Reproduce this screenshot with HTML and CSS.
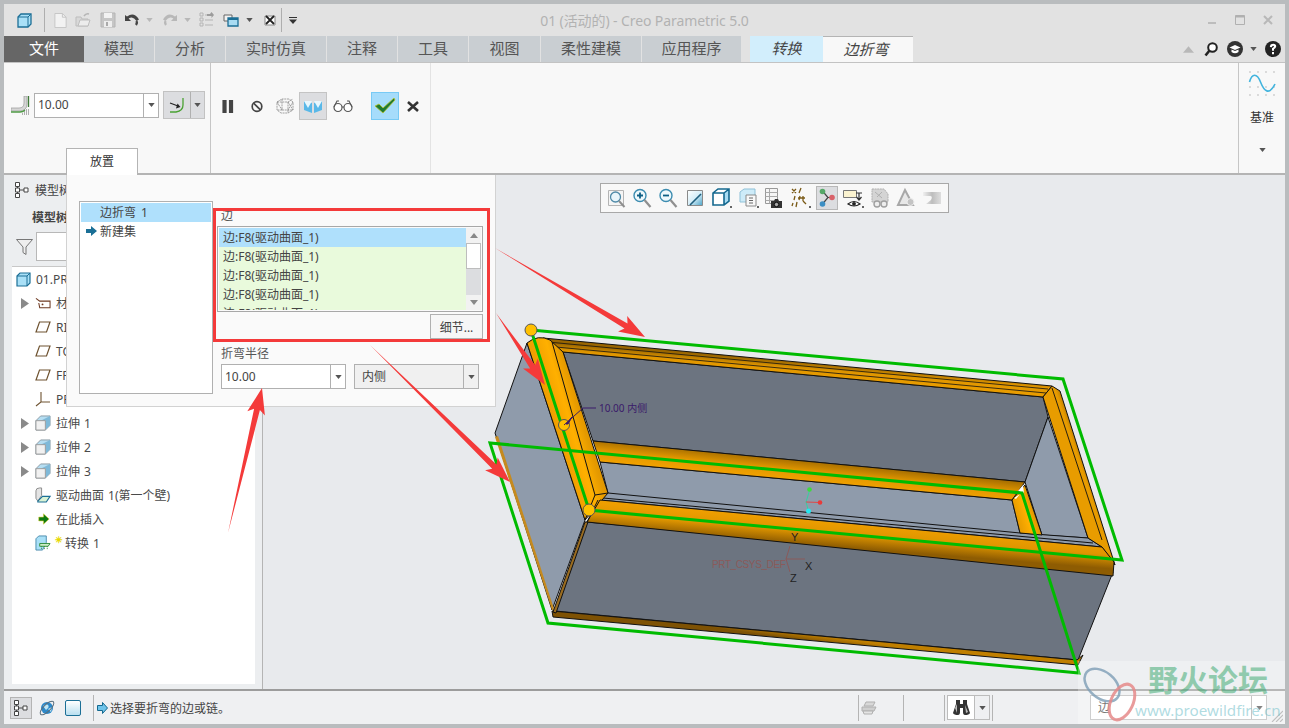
FILE: index.html
```html
<!DOCTYPE html>
<html lang="zh">
<head>
<meta charset="utf-8">
<title>01 (活动的) - Creo Parametric 5.0</title>
<link rel="stylesheet" href="styles.css">
</head>
<body>
<svg class="defs" width="0" height="0">
  <defs>
    <symbol id="caret" viewBox="0 0 8 5"><path d="M0 0H8L4 5Z" fill="currentColor"/></symbol>
    <symbol id="tri" viewBox="0 0 8 11"><path d="M0 0L8 5.5L0 11Z" fill="#8a8a8a"/></symbol>
    <symbol id="plane" viewBox="0 0 16 12"><path d="M4.5 1H15L11.5 11H1Z" fill="#fff" stroke="#6e5230" stroke-width="1.2"/></symbol>
    <symbol id="extrude" viewBox="0 0 17 17"><path d="M1 6L6 1H16V11L11 16H1Z" fill="#b6def2" stroke="#8a9aa4"/><path d="M6 6L16 1V11L11 16V6Z" fill="#7fb9d8"/><path d="M1 6H11V16H1Z" fill="#f1f1f1" stroke="#9a9a9a"/></symbol>
    <linearGradient id="gMid" gradientUnits="userSpaceOnUse" x1="802" y1="460" x2="800" y2="480"><stop offset="0" stop-color="#a56d00"/><stop offset=".55" stop-color="#e39800"/><stop offset="1" stop-color="#f0a000"/></linearGradient>
    <linearGradient id="gFront" gradientUnits="userSpaceOnUse" x1="852" y1="523" x2="850" y2="548"><stop offset="0" stop-color="#ee9e00"/><stop offset=".45" stop-color="#e09600"/><stop offset="1" stop-color="#8e5c02"/></linearGradient>
    <linearGradient id="gBack" gradientUnits="userSpaceOnUse" x1="800" y1="362" x2="799" y2="375"><stop offset="0" stop-color="#9a6600"/><stop offset=".5" stop-color="#e09600"/><stop offset="1" stop-color="#e89c00"/></linearGradient>
    <linearGradient id="gLeft" gradientUnits="userSpaceOnUse" x1="555" y1="425" x2="592" y2="414"><stop offset="0" stop-color="#f09f00"/><stop offset=".4" stop-color="#ffb000"/><stop offset=".7" stop-color="#e59a00"/><stop offset="1" stop-color="#d68f00"/></linearGradient>
    <linearGradient id="gRight" gradientUnits="userSpaceOnUse" x1="1066" y1="470" x2="1090" y2="462"><stop offset="0" stop-color="#e89c00"/><stop offset=".6" stop-color="#e89c00"/><stop offset="1" stop-color="#8a5a02"/></linearGradient>
    <linearGradient id="gBottom" gradientUnits="userSpaceOnUse" x1="815" y1="635" x2="814" y2="642"><stop offset="0" stop-color="#c07f00"/><stop offset="1" stop-color="#7e5204"/></linearGradient>
    <linearGradient id="gInner" gradientUnits="userSpaceOnUse" x1="1016" y1="515" x2="1036" y2="509"><stop offset="0" stop-color="#e89c00"/><stop offset=".5" stop-color="#ffb000"/><stop offset="1" stop-color="#d68f00"/></linearGradient>
    <linearGradient id="gRepaint" x1="0" y1="0" x2="1" y2="1"><stop offset="0" stop-color="#fff"/><stop offset=".5" stop-color="#d6eef8"/><stop offset="1" stop-color="#4aa3c8"/></linearGradient>
    <linearGradient id="gShade" x1="0" y1="0" x2="1" y2="0"><stop offset="0" stop-color="#f0f0f0"/><stop offset=".5" stop-color="#bdbdbd"/><stop offset="1" stop-color="#dedede"/></linearGradient>
  </defs>
</svg>

<div class="window">
  <header class="titlebar">
    <div class="qat">
      <svg class="i15" viewBox="0 0 15 15"><path d="M1 4L4 1H14V11L11 14H1Z" fill="#a9e0f7" stroke="#1c6f96" stroke-width="1.3"/><path d="M11 4H1M11 4L14 1M11 4V14" fill="none" stroke="#1c6f96"/></svg>
      <span class="qsep"></span>
      <svg class="i15" viewBox="0 0 14 16"><path d="M1 .5H9L13 4.5V15.5H1Z" fill="#f2f2f2" stroke="#c4c4c4"/><path d="M9 .5V4.5H13" fill="none" stroke="#c4c4c4"/></svg>
      <svg class="i16" viewBox="0 0 16 16"><path d="M1 5H6L7 7H13V14H1Z" fill="#d8d8d8" stroke="#bdbdbd"/><path d="M3 14L5 8H15L13 14Z" fill="#ececec" stroke="#bdbdbd"/><path d="M9 4Q11 1 14 2" fill="none" stroke="#b5b5b5" stroke-width="1.5"/></svg>
      <svg class="i16" viewBox="0 0 16 16"><path d="M1 1H15V15H1Z" fill="#c6c6c6" stroke="#b4b4b4"/><path d="M4 1H12V6H4Z" fill="#f2f2f2"/><path d="M4 9H12V15H4Z" fill="#eee"/><path d="M6 10H8V14H6Z" fill="#aaa"/></svg>
      <svg class="i16" viewBox="0 0 16 14"><path d="M1 2V8H7L4.6 5.6Q9 2.5 12.5 8L15 6.5Q10 -1.5 3 3.6Z" fill="#444"/><path d="M12.5 8Q13.6 10 12 12" stroke="#444" stroke-width="2.4" fill="none"/></svg>
      <svg class="car"><use href="#caret"/></svg>
      <svg class="i16" viewBox="0 0 16 14"><path d="M15 2V8H9L11.4 5.6Q7 2.5 3.500 8L1 6.500Q6 -1.500 13 3.600Z" fill="#b8b8b8"/><path d="M3.500 8Q2.400 10 4 12" stroke="#b8b8b8" stroke-width="2.400" fill="none"/></svg>
      <svg class="car"><use href="#caret"/></svg>
      <svg class="i16" viewBox="0 0 16 16"><path d="M1 1H4V4H1ZM1 6H4V9H1ZM1 11H4V14H1ZM6 3H14M6 8H14M6 13H14" fill="none" stroke="#b4b4b4"/><path d="M8 2H11L12.500 0L15 3L12.500 6V4H8Z" fill="#9c9c9c"/></svg>
      <svg class="i16" viewBox="0 0 16 16"><path d="M1 3H9V9H1Z" fill="#f2f2f2" stroke="#666"/><path d="M5 6H15V14H5Z" fill="#a9dcf3" stroke="#1c6f96" stroke-width="1.300"/><path d="M5 6H15V8H5Z" fill="#1c6f96"/></svg>
      <svg class="car dark"><use href="#caret"/></svg>
      <svg class="i12" viewBox="0 0 12 12"><path d="M1 2H11V11H1Z" fill="#fff" stroke="#888"/><path d="M2 2L10 10M10 2L2 10" stroke="#222" stroke-width="1.800"/></svg>
      <span class="qsep"></span>
      <svg class="car wide" viewBox="0 0 8 7"><path d="M0 0H8V1H0Z" fill="#333"/><path d="M0 2.500H8L4 7Z" fill="#333"/></svg>
    </div>
    <div class="wintitle">01 (活动的) - Creo Parametric 5.0</div>
    <div class="winbtns">
      <svg class="wb" viewBox="0 0 10 10"><path d="M1 7H9V9H1Z" fill="#bdbdbd"/></svg>
      <svg class="wb" viewBox="0 0 10 10"><path d="M.5 .5H9.500V9.500H.5Z" fill="none" stroke="#b0b0b0"/><path d="M.5 .5H9.500V2.500H.5Z" fill="#b0b0b0"/></svg>
      <svg class="wb" viewBox="0 0 10 10"><path d="M1 1L9 9M9 1L1 9" stroke="#b8b8b8" stroke-width="2"/></svg>
    </div>
  </header>

  <nav class="tabs">
    <div class="tab file">文件</div>
    <div class="tab w70">模型</div>
    <div class="tab w70">分析</div>
    <div class="tab w100">实时仿真</div>
    <div class="tab w70">注释</div>
    <div class="tab w70">工具</div>
    <div class="tab w71">视图</div>
    <div class="tab w100">柔性建模</div>
    <div class="tab w99">应用程序</div>
    <div class="tab ctx conv">转换</div>
    <div class="tab ctx act">边折弯</div>
    <div class="tabtools">
      <svg class="up" viewBox="0 0 12 7"><path d="M0 7L6 0L12 7Z" fill="#b8b8b8"/></svg>
      <svg class="t16" viewBox="0 0 14 15"><circle cx="8.500" cy="5.500" r="4.300" fill="#fff" stroke="#222" stroke-width="2"/><path d="M5.500 8.500L1.500 13.500" stroke="#222" stroke-width="2.600"/></svg>
      <svg class="t16b cap" viewBox="0 0 16 16"><circle cx="8" cy="8" r="8" fill="#333"/><path d="M2.500 6.500L8 4L13.500 6.500L8 9Z" fill="#fff"/><path d="M4.500 8.500V11Q8 13.500 11.500 11V8.500L8 10Z" fill="#fff"/></svg>
      <svg class="car dark mini"><use href="#caret"/></svg>
      <svg class="t16b help" viewBox="0 0 16 16"><circle cx="8" cy="8" r="8" fill="#222"/><path d="M4.800 6Q5 2.700 8.200 2.700Q11.400 2.900 11.200 5.600Q11 7.300 9 8.300V9.700H7V7.300Q9 6.500 9 5.300Q8.800 4.600 8 4.700Q7 4.800 7 6.200Z" fill="#fff"/><path d="M7 11H9V13.200H7Z" fill="#fff"/></svg>
    </div>
  </nav>

  <section class="ribbon">
    <div class="rgroup first">
      <div class="rrow">
        <svg class="edgeicon" viewBox="0 0 19 19"><path d="M0 12H8Q13 12 13 7V0H16V8Q16 15 8 15H0Z" fill="#d6d6d6" stroke="#9a9a9a" stroke-width=".7"/><path d="M0 16H9Q12 16 14 14" fill="none" stroke="#4f9b45" stroke-width="1.300"/><path d="M17.500 0V11" stroke="#3f7a38" stroke-width="1.300"/><path d="M15 14h.9M17 14h.9M13 16h.9M15 16h.9M17 16h.9M15 18h.9M17 18h.9M11 18h.9M13 18h.9" stroke="#555" stroke-width="1"/></svg>
        <div class="combo c125 main-val"><span class="val">10.00</span><span class="drop"><svg class="car dark"><use href="#caret"/></svg></span></div>
        <div class="flip">
          <span class="flipmain"><svg width="17" height="17" viewBox="0 0 17 17"><path d="M14 1V8Q14 14 7 15H1" fill="none" stroke="#4aa233" stroke-width="1.300"/><path d="M1 6L9 9" stroke="#222" stroke-width="1.100"/><path d="M7 11.500L11.500 10L8.500 6.500Z" fill="#222"/></svg></span>
          <span class="flipdrop"><svg class="car dark"><use href="#caret"/></svg></span>
        </div>
      </div>
      <div class="placetab">放置</div>
    </div>
    <div class="rgroup second">
      <svg class="ic12" viewBox="0 0 12 14"><path d="M0 0H4.500V14H0ZM7 0H11.500V14H7Z" fill="#444"/></svg>
      <svg class="ic12" viewBox="0 0 12 12"><circle cx="6" cy="6" r="4.800" fill="none" stroke="#444" stroke-width="1.700"/><path d="M2.600 2.600L9.400 9.400" stroke="#444" stroke-width="1.700"/></svg>
      <svg class="ic20" viewBox="0 0 20 16"><path d="M2 4L7 1H14L18 4V12L13 15H6L2 12ZM2 4H13V15M13 4L18 1M7 1V12H2M7 12L18 12M2 4L7 12M13 4L18 12M18 4L13 12" fill="none" stroke="#8a8a8a" stroke-width=".8" stroke-dasharray="2 .7"/></svg>
      <span class="toggle"><svg width="20" height="15" viewBox="0 0 20 15"><path d="M1 2L9 4V14L1 11Z" fill="#59b8e8"/><path d="M11 4L19 2V11L11 14Z" fill="#59b8e8"/><path d="M1 2L9 2L5 9Z" fill="#e8f7fd"/><path d="M11 2L19 2L15 9Z" fill="#e8f7fd"/></svg></span>
      <svg class="ic20" viewBox="0 0 20 12"><circle cx="5" cy="7.500" r="4" fill="#fff" stroke="#555" stroke-width="1.200"/><circle cx="15" cy="7.500" r="4" fill="#fff" stroke="#555" stroke-width="1.200"/><path d="M9 7L11 7M1 7L4 1H6M19 7L16 1H14" fill="none" stroke="#555" stroke-width="1.100"/></svg>
      <span class="okbtn"><svg width="22" height="18" viewBox="0 0 22 18"><path d="M1 9L5 7L9 11L20 1L21 3L9 16Z" fill="#1f7a33" stroke="#b9c22a" stroke-width=".8"/></svg></span>
      <svg class="ic12 xbtn" viewBox="0 0 12 11"><path d="M1 1L11 10M11 1L1 10" stroke="#333" stroke-width="2.600"/></svg>
    </div>
    <div class="rspacer"></div>
    <div class="rgroup third">
      <svg class="wave" width="28" height="26" viewBox="0 0 28 26"><path d="M2 1h.01M10 1h.01M18 1h.01M26 1h.01M2 16h.01M10 16h.01M18 16h.01M26 16h.01M2 24h.01M10 24h.01M18 24h.01M26 24h.01" stroke="#666" stroke-linecap="round"/><path d="M1.500 11C4 2 9 2 12.500 11S21 25 27 13" fill="none" stroke="#42b4de" stroke-width="1.600"/></svg>
      <div class="rlabel">基准</div>
      <svg class="car dark rcar"><use href="#caret"/></svg>
    </div>
  </section>

  <main class="main">
    <aside class="side">
      <div class="sidehead">
        <svg class="nodeic" viewBox="0 0 14 16"><path d="M.5 .5H4.500V4.500H.5ZM.5 6H4.500V10H.5ZM.5 11.500H4.500V15.500H.5ZM9 6H13V10H9ZM2.500 4.500V6M2.500 10V11.500M4.500 8H9" fill="#fff" stroke="#444"/></svg>
        <span>模型树</span>
      </div>
      <div class="sidetitle">模型树</div>
      <div class="sidefilter">
        <svg width="17" height="16" viewBox="0 0 17 16"><path d="M.5 .5H16.500L10 8V15.500L7 13.500V8Z" fill="#eee" stroke="#777"/></svg>
        <span class="filterbox"></span>
      </div>
      <div class="tree">
        <div class="row top">
          <svg class="cube" viewBox="0 0 15 15"><path d="M1 4L4 1H14V11L11 14H1Z" fill="#a9e0f7" stroke="#1c6f96" stroke-width="1.200"/><path d="M11 4H1M11 4L14 1M11 4V14" fill="none" stroke="#1c6f96"/></svg>
          <span>01.PRT</span>
        </div>
        <div class="row">
          <svg class="exp"><use href="#tri"/></svg>
          <svg class="ric" viewBox="0 0 17 12"><path d="M1 1L5 4H16V11H5L4 6" fill="#fff" stroke="#6e3a22" stroke-width="1.100"/><circle cx="8" cy="7.500" r="1" fill="#6e3a22"/></svg>
          <span>材料</span>
        </div>
        <div class="row"><span class="noexp"></span><svg class="ric"><use href="#plane"/></svg><span>RIGHT</span></div>
        <div class="row"><span class="noexp"></span><svg class="ric"><use href="#plane"/></svg><span>TOP</span></div>
        <div class="row"><span class="noexp"></span><svg class="ric"><use href="#plane"/></svg><span>FRONT</span></div>
        <div class="row"><span class="noexp"></span><svg class="ric" viewBox="0 0 16 16"><path d="M6 1V11L1 15M6 11H15" fill="none" stroke="#6e5230" stroke-width="1.100"/></svg><span>PRT_CSYS_DEF</span></div>
        <div class="row"><svg class="exp"><use href="#tri"/></svg><svg class="ric"><use href="#extrude"/></svg><span>拉伸 1</span></div>
        <div class="row"><svg class="exp"><use href="#tri"/></svg><svg class="ric"><use href="#extrude"/></svg><span>拉伸 2</span></div>
        <div class="row"><svg class="exp"><use href="#tri"/></svg><svg class="ric"><use href="#extrude"/></svg><span>拉伸 3</span></div>
        <div class="row"><span class="noexp"></span><svg class="ric" viewBox="0 0 17 17"><path d="M1 12V4Q1 1 5 1H7V9L3 15Z" fill="#e4e4e4" stroke="#8a8a8a"/><path d="M3 15L8 10H16L12 16H3Z" fill="#d9f3d5" stroke="#1c6f96" stroke-width="1.200"/></svg><span>驱动曲面 1(第一个壁)</span></div>
        <div class="row"><span class="noexp"></span><svg class="ric" viewBox="0 0 17 13"><path d="M4 4.500H9V1L15 6.500L9 12V8.500H4Z" fill="#0d7a13" stroke="#e0d030" stroke-width=".6"/></svg><span>在此插入</span></div>
        <div class="row"><span class="noexp"></span><svg class="ric" viewBox="0 0 17 17"><path d="M1 4L4 1H12V8L8 16H1Z" fill="#a9e0f7" stroke="#4a8bad"/><path d="M5 9H16L14 12H5Z" fill="#cdeec6" stroke="#2e8b3a"/><path d="M7 12V16M10 12V16M13 12V16" stroke="#2e8b3a" stroke-dasharray="1 1"/></svg><span class="star">✳</span><span>转换 1</span></div>
      </div>
    </aside>

    <div class="canvas">
      <div class="gtools">
        <svg class="gi" viewBox="0 0 22 24"><path d="M3.500 4.500H18.500V19.500H3.500Z" fill="#f5f5f5" stroke="#b4b4b4"/><circle cx="10.500" cy="11" r="5" fill="#e8f5fb" stroke="#4f8aa8" stroke-width="1.300"/><path d="M14 15L19.500 21" stroke="#8f8f8f" stroke-width="2"/></svg>
        <svg class="gi" viewBox="0 0 22 24"><circle cx="9" cy="9.500" r="6" fill="#eef8fc" stroke="#3c8cb0" stroke-width="1.400"/><path d="M13.500 14L19.500 21" stroke="#8f8f8f" stroke-width="2.200"/><path d="M6 9.500H12M9 6.500V12.500" stroke="#0d5f85" stroke-width="1.800"/></svg>
        <svg class="gi" viewBox="0 0 22 24"><circle cx="9" cy="9.500" r="6" fill="#eef8fc" stroke="#3c8cb0" stroke-width="1.400"/><path d="M13.500 14L19.500 21" stroke="#8f8f8f" stroke-width="2.200"/><path d="M6 9.500H12" stroke="#0d5f85" stroke-width="1.800"/></svg>
        <svg class="gi" viewBox="0 0 22 24"><path d="M3.500 4.500H18.500V19.500H3.500Z" fill="url(#gRepaint)" stroke="#8a8a8a"/><path d="M6 19L17 8" stroke="#1f5f7e" stroke-width="1.600"/></svg>
        <svg class="gi" viewBox="0 0 22 24"><path d="M3 7L8 3H19V15L14 19H3Z" fill="#fff"/><path d="M14 7L19 3V15L14 19Z" fill="#a9dcf3"/><path d="M3 7L8 3H19V15L14 19H3ZM3 7H14V19M14 7L19 3" fill="none" stroke="#14688f" stroke-width="1.600"/><path d="M20 20H22V22H20Z" fill="#666"/></svg>
        <svg class="gi" viewBox="0 0 22 24"><path d="M3 6L7 3H18V16H3Z" fill="#cdebf8" stroke="#8fc1d8"/><path d="M9 9H19V20H9Z" fill="#f8f8f8" stroke="#8a8a8a"/><path d="M12 12H16M12 14.500H16M12 17H16" stroke="#666"/><path d="M20 20H22V22H20Z" fill="#666"/></svg>
        <svg class="gi" viewBox="0 0 22 24"><path d="M2.500 2.500H14.500V17.500H2.500Z" fill="#f6f6f6" stroke="#999"/><path d="M2.500 6.500H14.500M2.500 10.500H14.500M2.500 14.500H14.500M6.500 2.500V17.500" stroke="#aaa"/><path d="M8 15H11L12 13H15L16 15H19V22H8Z" fill="#333"/><circle cx="13.500" cy="18.500" r="2.200" fill="#aaa" stroke="#111"/></svg>
        <svg class="gi" viewBox="0 0 22 24"><path d="M3 3L7 7M7 3L3 7M12 2L10 7M6 10L5 14M11 10L10 14M9 12H16M14 10V15M4 17L3 20M8 16L7 21M14 15L17 18" fill="none" stroke="#7a5a16" stroke-width="1.300"/><path d="M20 20H22V22H20Z" fill="#666"/></svg>
        <span class="gactive"><svg width="20" height="22" viewBox="0 0 20 22"><path d="M5.500 4L11 10.500L5.500 17M11 10.500H15" fill="none" stroke="#444" stroke-width="1.200"/><circle cx="5.500" cy="4.500" r="2.800" fill="#56a868"/><circle cx="15" cy="10.500" r="2.800" fill="#d9626a"/><circle cx="5.500" cy="17" r="2.800" fill="#3c8fc4"/></svg></span>
        <svg class="gi" viewBox="0 0 22 24"><path d="M1.500 4.500H14.500V11.500H1.500Z" fill="#fbf3d0" stroke="#777"/><path d="M14 7H20M17 7V13M14.500 11L17 14L19.500 11" fill="none" stroke="#333" stroke-width="1.200"/><path d="M6 18Q12 13 18 18Q12 22 6 18Z" fill="#fff" stroke="#222" stroke-width="1.200"/><circle cx="12" cy="17.800" r="1.900" fill="#222"/><path d="M20 20H22V22H20Z" fill="#666"/></svg>
        <svg class="gi" viewBox="0 0 22 24"><path d="M3 3H15L19 8V16H3Z" fill="#d4d4d4" stroke="#b0b0b0" stroke-dasharray="2 .6"/><path d="M6 6L13 12M13 6L8 11" stroke="#b0b0b0"/><circle cx="8" cy="18" r="3" fill="#eee" stroke="#a0a0a0" stroke-width="1.400"/><circle cx="15" cy="18" r="3" fill="#eee" stroke="#a0a0a0" stroke-width="1.400"/></svg>
        <svg class="gi" viewBox="0 0 22 24"><path d="M10 4L18 19H3Z" fill="#e8e8e8" stroke="#a8a8a8" stroke-width="2"/><circle cx="15.500" cy="16" r="3.500" fill="#c4c4c4" stroke="#eee"/></svg>
        <svg class="gi" viewBox="0 0 22 24"><path d="M2 6H20V18H5L10 14Q12 10 9 10H2Z" fill="url(#gShade)"/></svg>
      </div>
    </div>

    <div class="popup">
      <div class="setlist">
        <div class="setitem sel">边折弯 1</div>
        <div class="setitem"><svg class="setarrow" viewBox="0 0 11 10"><path d="M0 3H5V0L11 5L5 10V7H0Z" fill="#1a6f96"/></svg>新建集</div>
      </div>
      <div class="refs">
        <div class="lab edge">边</div>
        <div class="listbox">
          <div class="rows">
            <div class="lrow blue">边:F8(驱动曲面_1)</div>
            <div class="lrow">边:F8(驱动曲面_1)</div>
            <div class="lrow">边:F8(驱动曲面_1)</div>
            <div class="lrow">边:F8(驱动曲面_1)</div>
            <div class="lrow">边:F8(驱动曲面_1)</div>
          </div>
          <div class="sbar">
            <span class="sbtn"><svg class="tiny" viewBox="0 0 8 5"><path d="M0 5H8L4 0Z" fill="#888"/></svg></span>
            <span class="sthumb"></span>
            <span class="strack"></span>
            <span class="sbtn"><svg class="tiny" viewBox="0 0 8 5"><path d="M0 0H8L4 5Z" fill="#888"/></svg></span>
          </div>
        </div>
        <div class="btnrow"><button class="detail">细节...</button></div>
        <div class="lab radius">折弯半径</div>
        <div class="radiusrow">
          <div class="combo c125"><span class="val">10.00</span><span class="drop"><svg class="car dark"><use href="#caret"/></svg></span></div>
          <div class="combo c125 off"><span class="val">内侧</span><span class="drop"><svg class="car dark"><use href="#caret"/></svg></span></div>
        </div>
      </div>
    </div>
  </main>

  <footer class="status">
    <span class="stree"><svg width="14" height="16" viewBox="0 0 14 16"><path d="M.5 .5H4.500V4.500H.5ZM.5 6H4.500V10H.5ZM.5 11.500H4.500V15.500H.5ZM9 6H13V10H9ZM2.500 4.500V6M2.500 10V11.500M4.500 8H9" fill="#fff" stroke="#444"/></svg></span>
    <svg class="globe" viewBox="0 0 16 16"><circle cx="8" cy="8" r="6" fill="#2c88c9"/><path d="M4 6Q7 3 9 5T7 10ZM9 9L13 7L12 12Z" fill="#bfe6f5"/><ellipse cx="8" cy="8" rx="9" ry="3.500" transform="rotate(-45 8 8)" fill="none" stroke="#5a6e7c"/></svg>
    <span class="sq"></span>
    <span class="ssep lead"></span>
    <svg class="msgarrow" viewBox="0 0 11 12"><path d="M.5 3.500H5.500V.5L10.500 6L5.500 11.500V8.500H.5Z" fill="#6fc4ea" stroke="#14688f"/></svg>
    <span class="msg">选择要折弯的边或链。</span>
    <span class="sfill"></span>
    <span class="ssep"></span>
    <svg class="printer" viewBox="0 0 16 14"><path d="M5 1H14L12 5H3Z" fill="#d8d8d8" stroke="#b0b0b0"/><path d="M1 6H15L13 10H1Z" fill="#cfcfcf" stroke="#b0b0b0"/><path d="M2 10H12L11 13H3Z" fill="#e4e4e4" stroke="#b0b0b0"/></svg>
    <span class="ssep s2"></span>
    <span class="ssep s3"></span>
    <span class="bino">
      <span class="binomain"><svg width="17" height="15" viewBox="0 0 17 15"><path d="M3 0H7V4H10V0H14V4L17 13Q16 15 12 15Q10 15 10 12V8H7V12Q7 15 5 15Q1 15 0 13L3 4Z" fill="#333"/><path d="M2 8L4 4V13ZM12 5L13 13L15 12Z" fill="#bbb"/></svg></span>
      <span class="binodrop"><svg class="car dark"><use href="#caret"/></svg></span>
    </span>
    <span class="ssep s4"></span>
    <div class="filter"><span class="val">边</span><span class="drop"><svg class="car dark"><use href="#caret"/></svg></span></div>
    <svg class="grip" viewBox="0 0 12 12"><path d="M1 12L12 1M5 12L12 5M9 12L12 9" stroke="#a8a8a8" stroke-width="1.100"/></svg>
  </footer>

  <svg class="scene" viewBox="0 0 1289 728" width="1289" height="728">
    <g stroke="#111" stroke-width="1" stroke-linejoin="round">
      <path d="M495 433L527 343L585 520L552 610Z" fill="#8f9bab"/>
      <path d="M495 437L552 610L555 612L498 436Z" fill="#c68a1e" stroke="none"/>
      <path d="M563 352L1043 397L1048 417L1025 482L593 441Z" fill="#6c7480"/>
      <path d="M1048 417L1025 482L1042 535L1088 538Z" fill="#8f9bab"/>
      <path d="M600 462L1012 500L1020 533L1088 538L1102 547L600 500L608 493Z" fill="#8f9bab"/>
      <path d="M608 493L1020 533M603 498L1093 543" fill="none"/>
      <path d="M587 522L1113 572L1078 660L555 611Z" fill="#6c7480"/>
      <path d="M552 611L1077 660L1083 655L1078 665L553 617Z" fill="url(#gBottom)"/>
      <path d="M585 522L553 612L556 613L588 522Z" fill="#9a6c20"/>
      <path d="M543 338L1052 386L1043 397L563 352Z" fill="url(#gBack)"/>
      <path d="M548 342L1048 389M556 347L1046 393" fill="none" stroke-width=".8"/>
      <path d="M593 441L1025 482L1012 500L600 462Z" fill="url(#gMid)"/>
      <path d="M527 343Q538 334 550 340L563 352L608 493L585 520Z" fill="url(#gLeft)"/>
      <path d="M552 342L595 495L585 520M595 495L608 493" fill="none"/>
      <path d="M1052 386L1060 391L1115 565L1102 547L1088 538L1043 397Z" fill="url(#gRight)"/>
      <path d="M1052 388L1102 540" fill="none" stroke-width=".9"/>
      <path d="M1012 500L1025 485L1042 535L1020 533Z" fill="url(#gInner)"/>
      <path d="M1014 498L1020 494L1016 499ZM1018 491L1023 485L1024 493Z" fill="#fff" stroke="none"/>
      <path d="M600 500L1102 547L1114 562L1113 576L587 522Z" fill="url(#gFront)"/>
      <path d="M598 500L587 522" fill="none"/>
    </g>
    <g fill="none" stroke="#00bb00" stroke-width="3" stroke-linejoin="miter">
      <path d="M531 330L1063 379L1122 560L589 510Z"/>
      <path d="M1022 493L490 443L548 623L1079 673Z"/>
    </g>
    <g stroke="#555" stroke-width="1" fill="#ffc000">
      <circle cx="531" cy="330" r="6"/>
      <circle cx="564" cy="425" r="5.500"/>
      <circle cx="589" cy="510" r="6"/>
    </g>
    <path d="M564 425L583 408H596" fill="none" stroke="#3a1a6a"/>
    <path d="M566 424L572 417L568 424Z" stroke="#3a1a6a" fill="#3a1a6a"/>
    <text class="dim" x="599" y="412">10.00 内侧</text>
    <g fill="none" stroke-width="1">
      <path d="M808.500 511L806 502L810 489" stroke="#35d0a0"/>
      <path d="M806 502L820 502.500" stroke="#e04848"/>
    </g>
    <circle cx="809.500" cy="489.500" r="2.300" fill="#3ed93e"/>
    <circle cx="820" cy="502.500" r="2.300" fill="#e83a3a"/>
    <circle cx="808.500" cy="511" r="2.500" fill="#25e8f0"/>
    <path d="M790 546L786 559L790 572M786 559H805" fill="none" stroke="#8a5a5a"/>
    <text class="csys" x="712" y="568">PRT_CSYS_DEF</text>
    <text class="axis" x="791" y="541">Y</text>
    <text class="axis" x="805" y="570">X</text>
    <text class="axis" x="790" y="582">Z</text>
    <g fill="#f43a3a">
      <path d="M495 248L624.500 328.600L618 331.400L645 337L627.200 316L627.500 323.400Z"/>
      <path d="M496 313L530.100 368.500L523 368.600L545 385L537.800 358.400L535.100 365.100Z"/>
      <path d="M370 345L492.200 468.700L485.100 470.200L510 482L497.700 457.400L496.400 464.500Z"/>
      <path d="M228 533L259.900 410.100L264.900 415.400L262 388L247.300 411.200L254.100 408.700Z"/>
    </g>
  </svg>
  <div class="redbox"></div>

  <div class="watermark">
    <svg class="rings" viewBox="0 0 60 62" width="60" height="62">
      <ellipse cx="20" cy="20" rx="20" ry="13" transform="rotate(40 20 20)" fill="none" stroke="#7d9db5" stroke-width="2.500" opacity=".8"/>
      <ellipse cx="40" cy="37" rx="11" ry="19" transform="rotate(25 40 37)" fill="none" stroke="#e58a8a" stroke-width="3" opacity=".85"/>
    </svg>
    <div class="wmtext">
      <div class="wmcn">野火论坛</div>
      <div class="wmen">www.proewildfire.cn</div>
    </div>
  </div>
</div>
</body>
</html>
```

FILE: styles.css
```css
* { box-sizing: border-box; }
html, body { margin: 0; padding: 0; }
body {
  width: 1289px;
  height: 728px;
  overflow: hidden;
  font-family: "Noto Sans", "Noto Sans CJK SC", sans-serif;
  font-size: 12px;
  color: #444;
}
.defs { position: absolute; }
svg { display: block; flex: none; }

.window {
  position: relative;
  width: 1289px;
  height: 728px;
  padding: 4px;
  background: #b9bcbe;
  display: flex;
  flex-direction: column;
}

/* title bar */
.titlebar {
  height: 32px;
  background: #e2e2e2;
  display: grid;
  grid-template-columns: 1fr auto 1fr;
  align-items: center;
}
.qat {
  padding-left: 13px;
  display: grid;
  grid-template-columns: 27px 9px 22px 25px 24px 22px 16px 22px 15px 24px 23px 18px 17px 8px 8px;
  align-items: center;
  justify-items: start;
  color: #bdbdbd;
}
.qsep { width: 1px; height: 24px; background: #aeaeae; }
.i15 { width: 15px; height: 15px; }
.i16 { width: 16px; height: 16px; }
.i12 { width: 12px; height: 12px; }
.car { width: 7px; height: 4px; color: #b8b8b8; }
.car.dark { color: #555; }
.car.wide { width: 8px; height: 7px; }
.car.mini { width: 7px; height: 4px; margin-left: 7px; }
.wintitle { color: #b2b2b2; font-size: 14px; letter-spacing: -.1px; }
.winbtns { display: flex; justify-content: flex-end; gap: 18px; padding-right: 12px; }
.wb { width: 10px; height: 10px; }

/* tabs */
.tabs { height: 26px; background: #e2e2e2; display: flex; gap: 1px; color: #555; }
.tab {
  height: 26px;
  background: #c9ced2;
  font-size: 15px;
  line-height: 25px;
  text-align: center;
  flex: none;
}
.file { width: 80px; background: #666; color: #fff; margin-right: -1px; }
.w70 { width: 70px; }
.w71 { width: 71px; }
.w100 { width: 100px; }
.w99 { width: 99px; }
.ctx { font-style: italic; color: #444; }
.conv { width: 73px; background: #d2eefc; margin-left: 8px; }
.act { width: 90px; background: #f8f8f8; border-top: 1px solid #b4b4b4; margin-left: -1px; padding-right: 4px; }
.tabtools { flex: 1; display: flex; align-items: center; justify-content: flex-end; padding-right: 4px; }
.up { width: 11px; height: 7px; margin-right: 10px; }
.t16 { width: 14px; height: 15px; }
.t16b { width: 16px; height: 16px; }
.cap { margin-left: 9px; }
.help { margin-left: 8px; }

/* ribbon */
.ribbon {
  height: 113px;
  background: #f8f8f8;
  border-top: 1px solid #c3c3c3;
  border-bottom: 2px solid #b4b4b4;
  display: flex;
  position: relative;
}
.rgroup { flex: none; }
.first { width: 207px; border-right: 1px solid #c6c6c6; padding: 28px 0 0 7px; display: flex; flex-direction: column; justify-content: space-between; }
.rrow { display: flex; align-items: center; }
.edgeicon { width: 19px; height: 19px; margin-right: 4px; }
.combo { display: flex; height: 25px; background: #fff; border: 1px solid #b0b0b0; align-items: stretch; }
.c125 { width: 125px; }
.val { flex: 1; padding-left: 3px; line-height: 23px; font-size: 12px; color: #444; }
.main-val .val { line-height: 22px; }
.drop { width: 15px; border-left: 1px solid #b0b0b0; display: flex; align-items: center; justify-content: center; }
.flip { display: flex; width: 42px; height: 28px; margin-left: 4px; background: #dcdde0; border: 1px solid #c2c2c2; }
.flipmain { flex: 1; display: flex; align-items: center; justify-content: center; border-right: 1px solid #b0b0b0; }
.flipdrop { width: 13px; display: flex; align-items: center; justify-content: center; }
.placetab {
  width: 72px;
  height: 27px;
  margin: 0 0 -2px 55px;
  background: #fff;
  border: 1px solid #b4b4b4;
  border-bottom: none;
  text-align: center;
  line-height: 26px;
  color: #333;
  position: relative;
}
.second {
  width: 220px;
  border-right: 1px solid #e3e3e3;
  padding: 29px 0 0 11px;
  display: grid;
  grid-template-columns: 29px 24px 24px 34px 38px 36px 12px;
  grid-template-rows: 28px;
  align-items: center;
  justify-items: start;
  align-content: start;
}
.ic12 { width: 12px; height: 13px; }
.ic20 { width: 20px; height: 16px; }
.xbtn { height: 11px; }
.toggle, .okbtn { width: 28px; height: 28px; display: flex; align-items: center; justify-content: center; }
.toggle { background: #dcdde0; border: 1px solid #c4c4c4; }
.okbtn { background: #a6dcfb; border: 1px solid #78caf5; }
.rspacer { flex: 1; }
.third {
  width: 47px;
  border-left: 1px solid #c6c6c6;
  display: flex;
  flex-direction: column;
  align-items: center;
  padding-top: 8px;
}
.rlabel { margin-top: 12px; line-height: 18px; color: #333; font-size: 12px; }
.rcar { margin-top: 21px; }

/* main */
.main { flex: 1; display: flex; position: relative; min-height: 0; }
.side {
  width: 259px;
  flex: none;
  background: #eceef0;
  border-right: 1px solid #b4b4b4;
  padding: 0 7px 5px 8px;
  display: flex;
  flex-direction: column;
}
.sidehead { height: 30px; display: flex; align-items: center; gap: 6px; padding-left: 3px; white-space: nowrap; overflow: hidden; }
.nodeic { width: 14px; height: 16px; }
.sidetitle { height: 27px; line-height: 26px; padding-left: 20px; font-weight: 700; white-space: nowrap; }
.sidefilter { height: 34px; display: flex; align-items: flex-start; gap: 3px; padding-left: 4px; }
.sidefilter svg { margin-top: 7px; }
.filterbox { flex: 1; height: 29px; background: #fff; border: 1px solid #b8b8b8; }
.tree { flex: 1; background: #fff; border-top: 1px solid #c8c8c8; }
.row { height: 24px; display: flex; align-items: center; white-space: nowrap; padding-left: 9px; color: #4a4a4a; word-spacing: 1px; }
.row.top { padding-left: 4px; gap: 5px; }
.cube { width: 15px; height: 15px; }
.exp { width: 8px; height: 11px; margin-right: 6px; }
.noexp { width: 14px; }
.ric { width: 16px; height: 16px; margin-right: 5px; }
.star { color: #e6d800; font-size: 9px; margin: -8px 2px 0 -1px; font-weight: 700; }

.canvas { flex: 1; background: #e8eaed; padding-top: 8px; display: flex; justify-content: center; align-items: flex-start; }
.gtools {
  width: 349px;
  height: 30px;
  background: #f8f8f8;
  border: 1px solid #a8a8a8;
  display: flex;
  align-items: center;
  justify-content: space-between;
  padding: 0 4px 0 4px;
}
.gi { width: 22px; height: 24px; }
.gactive { width: 22px; height: 24px; background: #dcdde0; border: 1px solid #b8b8b8; display: flex; align-items: center; justify-content: center; }

/* placement popup */
.popup {
  position: absolute;
  left: 62px;
  top: 0;
  width: 430px;
  height: 232px;
  background: #fafafa;
  border: 1px solid #d2d2d2;
  border-top: none;
  padding: 26px 0 0 12px;
  display: flex;
  gap: 4px;
}
.setlist { width: 134px; height: 193px; background: #fff; border: 1px solid #b0b0b0; padding: 1px; }
.setitem { height: 19px; line-height: 19px; padding-left: 19px; position: relative; color: #444; word-spacing: 2px; }
.setitem.sel { background: #afe0fc; }
.setarrow { position: absolute; left: 5px; top: 4px; width: 11px; height: 10px; }
.refs { width: 266px; display: flex; flex-direction: column; }
.lab { line-height: 16px; color: #555; }
.edge { height: 17px; padding-left: 4px; margin-top: 7px; margin-bottom: 1px; overflow: hidden; }
.listbox { height: 86px; border: 1px solid #a8a8a8; padding: 1px; display: flex; overflow: hidden; }
.rows { flex: 1; overflow: hidden; }
.lrow { height: 19px; line-height: 19px; padding-left: 4px; background: #e9fadc; color: #444; white-space: nowrap; }
.lrow.blue { background: #afe0fc; }
.sbar { width: 15px; display: flex; flex-direction: column; background: #fff; }
.sbtn { height: 15px; background: #f2f2f2; display: flex; align-items: center; justify-content: center; flex: none; }
.tiny { width: 8px; height: 5px; }
.sthumb { height: 26px; background: #fff; border: 1px solid #bdbdbd; flex: none; }
.strack { flex: 1; background: #dcdde0; }
.btnrow { display: flex; justify-content: flex-end; margin-top: 2px; }
.detail {
  width: 53px;
  height: 25px;
  padding: 0;
  background: #f6f6f6;
  border: 1px solid #b0b0b0;
  font: inherit;
  color: #444;
}
.radius { padding-left: 4px; margin-top: 7px; height: 18px; }
.radiusrow { display: flex; gap: 8px; padding-left: 4px; }
.combo.off { background: #f0f0f0; }
.combo.off .val { padding-left: 7px; }

/* status */
.status {
  height: 35px;
  background: #eff0f2;
  border-top: 2px solid #9c9c9c;
  display: flex;
  align-items: center;
  padding: 0 18px 0 6px;
  flex: none;
  position: relative;
}
.stree { width: 22px; height: 22px; background: #dcdde0; border: 1px solid #b4b4b4; display: flex; align-items: center; justify-content: center; }
.globe { width: 16px; height: 16px; margin-left: 7px; }
.sq { width: 16px; height: 16px; margin-left: 10px; border: 1px solid #1c6f96; border-radius: 2px; background: linear-gradient(#fff, #b9dff0); }
.ssep { width: 1px; height: 26px; background: #b4b4b4; flex: none; }
.ssep.lead { margin-left: 12px; }
.msgarrow { width: 11px; height: 12px; margin-left: 3px; }
.msg { margin-left: 2px; color: #444; font-size: 12px; }
.sfill { flex: 1; }
.printer { width: 16px; height: 14px; margin-left: 2px; }
.s2 { margin-left: 26px; }
.s3 { margin-left: 40px; }
.bino { width: 43px; height: 25px; display: flex; margin-left: 2px; border: 1px solid #bcbcbc; background: #fff; }
.binomain { flex: 1; display: flex; align-items: center; justify-content: center; border-right: 1px solid #bcbcbc; }
.binodrop { width: 14px; background: #eff0f2; display: flex; align-items: center; justify-content: center; }
.s4 { margin-left: 2px; }
.filter { width: 177px; height: 25px; margin-left: 97px; display: flex; background: #fff; border: 1px solid #bcbcbc; }
.filter .val { padding-left: 7px; }
.grip { position: absolute; right: 2px; bottom: 2px; width: 12px; height: 12px; }

/* free canvas overlay: 3D model and red review annotations */
.scene { position: absolute; left: 0; top: 0; pointer-events: none; }
.dim { font-size: 10px; fill: #3a1a6a; font-family: "Noto Sans", "Noto Sans CJK SC", sans-serif; }
.csys { font-size: 10px; letter-spacing: -.4px; fill: #8a5a5a; font-family: "Liberation Sans", sans-serif; }
.axis { font-size: 11px; fill: #222; font-family: "Liberation Sans", sans-serif; }
.redbox { position: absolute; left: 213px; top: 208px; width: 277px; height: 134px; border: 3px solid #f43a3a; pointer-events: none; }

/* watermark */
.watermark {
  position: absolute;
  left: 1078px;
  top: 661px;
  width: 207px;
  height: 63px;
  background: rgba(255, 255, 255, .28);
  display: flex;
  padding: 4px 0 0 4px;
}
.rings { margin-right: -6px; }
.wmtext { display: flex; flex-direction: column; }
.wmcn { font-size: 30px; line-height: 30px; font-weight: 700; color: rgba(50, 165, 105, .5); padding-left: 12px; }
.wmen { font-size: 15.200px; line-height: 22px; margin-top: 4px; color: rgba(110, 190, 200, .55); margin-left: -1px; white-space: nowrap; }
```
